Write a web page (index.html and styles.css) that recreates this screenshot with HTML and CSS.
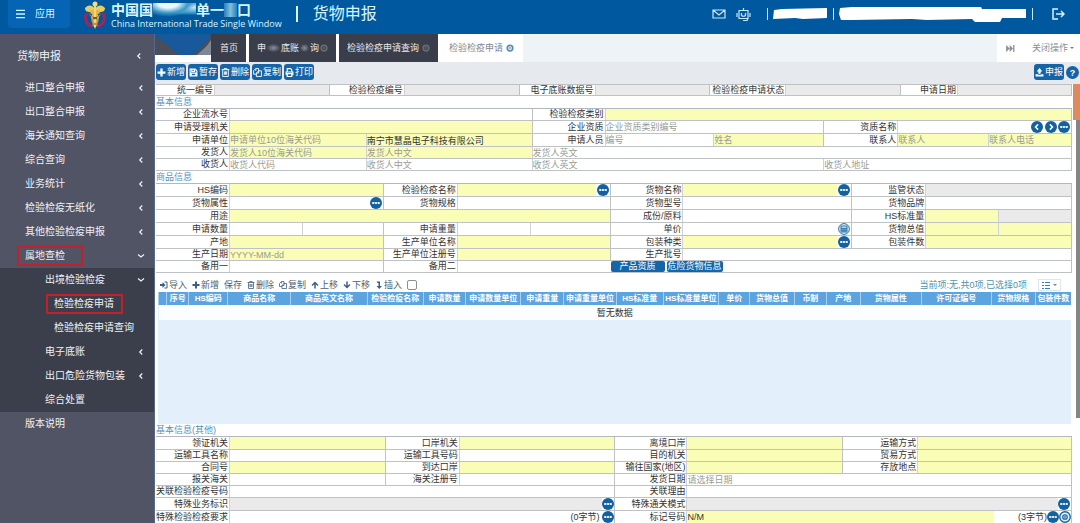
FILE: index.html
```
<!DOCTYPE html>
<html lang="zh-CN">
<head>
<meta charset="utf-8">
<title>货物申报</title>
<link rel="stylesheet" href="styles.css">
</head>
<body>
<svg class="sprite" aria-hidden="true">
  <symbol id="i-plus" viewBox="0 0 16 16"><path d="M6 1h4v5h5v4h-5v5H6v-5H1V6h5z" fill="currentColor"/></symbol>
  <symbol id="i-save" viewBox="0 0 16 16"><path d="M2 2h9l3 3v9H2zM5 2v4h5V2M4 14V9h8v5" fill="none" stroke="currentColor" stroke-width="2"/></symbol>
  <symbol id="i-trash" viewBox="0 0 16 16"><path d="M1 3h14M5.500 3V1h5v2M3 3v12h10V3M6 6v6M8 6v6M10 6v6" fill="none" stroke="currentColor" stroke-width="1.600"/></symbol>
  <symbol id="i-copy" viewBox="0 0 16 16"><path d="M5 5V1h5v5M5 1L1 5v6h5M10 5h5v10H6V9l4-4v4H6" fill="none" stroke="currentColor" stroke-width="1.600"/></symbol>
  <symbol id="i-print" viewBox="0 0 16 16"><path d="M4 7V1h6l2 2v4M2 12V7h12v5h-2M4 10h8v5H4zM2 12h2" fill="none" stroke="currentColor" stroke-width="2"/></symbol>
  <symbol id="i-upload" viewBox="0 0 16 16"><path d="M8 0l5 6h-3v4H6V6H3zM1 11h4v1h6v-1h4v4H1z" fill="currentColor"/></symbol>
  <symbol id="i-up" viewBox="0 0 16 16"><path d="M8 1l7 7-2 2-3.500-3.500V15h-3V6.500L3 10 1 8z" fill="currentColor"/></symbol>
  <symbol id="i-down" viewBox="0 0 16 16"><path d="M8 15l7-7-2-2-3.500 3.500V1h-3v8.500L3 6 1 8z" fill="currentColor"/></symbol>
  <symbol id="i-insert" viewBox="0 0 16 16"><path d="M3 1h7v9h4l-5.500 6L3 10h4V4H5z" fill="currentColor"/></symbol>
  <symbol id="i-import" viewBox="0 0 16 16"><path d="M0 6h5V2l6 6-6 6v-4H0z" fill="currentColor"/><path d="M9 2h5v12H9" fill="none" stroke="currentColor" stroke-width="2"/></symbol>
  <symbol id="i-more" viewBox="0 0 16 16"><circle cx="8" cy="8" r="8" fill="#13629f"/><path d="M3 7.900h10" stroke="#6fa5cf" stroke-width="2"/><circle cx="4.200" cy="8" r="1.400" fill="#fff"/><circle cx="8" cy="8" r="1.400" fill="#fff"/><circle cx="11.800" cy="8" r="1.400" fill="#fff"/></symbol>
  <symbol id="i-prev" viewBox="0 0 16 16"><circle cx="8" cy="8" r="8" fill="#13629f"/><path d="M9.500 4.500L6 8l3.500 3.500" fill="none" stroke="#fff" stroke-width="2"/></symbol>
  <symbol id="i-next" viewBox="0 0 16 16"><circle cx="8" cy="8" r="8" fill="#13629f"/><path d="M6.500 4.500L10 8l-3.500 3.500" fill="none" stroke="#fff" stroke-width="2"/></symbol>
  <symbol id="i-calc" viewBox="0 0 16 16"><circle cx="8" cy="8" r="7.200" fill="#e4f0fa" stroke="#13629f" stroke-width="1.200"/><path d="M4 4h8v8H4zM4 7h8M4 9.500h8M6.700 7v5M9.300 7v5" fill="none" stroke="#13629f" stroke-width="1.200"/></symbol>
  <symbol id="i-at" viewBox="0 0 16 16"><circle cx="8" cy="8" r="7" fill="#e4f0fa" stroke="#13629f" stroke-width="1.800"/><circle cx="8" cy="8" r="3" fill="none" stroke="#13629f" stroke-width="1.600"/><path d="M8 6v4" stroke="#13629f" stroke-width="1.600"/></symbol>
  <symbol id="i-close" viewBox="0 0 16 16"><circle cx="8" cy="8" r="5.500" fill="none" stroke="currentColor" stroke-width="3.500"/><path d="M6 6l4 4M10 6l-4 4" stroke="currentColor" stroke-width="1.200"/></symbol>
  <symbol id="i-left" viewBox="0 0 16 16"><path d="M10.500 3L5.500 8l5 5" fill="none" stroke="currentColor" stroke-width="2.400"/></symbol>
  <symbol id="i-open" viewBox="0 0 16 16"><path d="M2 5l6 5 6-5" fill="none" stroke="currentColor" stroke-width="2.400"/></symbol>
</svg>

<header class="header">
  <button class="apps"><svg class="burger" viewBox="0 0 10 10"><path d="M0 1h10M0 5h10M0 9h10" stroke="#c9f5ff" stroke-width="1.400"/></svg>应用</button>
  <svg class="logo" viewBox="0 0 24 28">
    <path d="M4 12C1 17 3 24 9 25M20 12c3 5 1 12-5 13" fill="none" stroke="#a3235a" stroke-width="3"/>
    <path d="M12 8C8 2 4 5 2 7c0 3 2 4 5 4l5 1 5-1c3 0 5-1 5-4-2-2-6-5-10 1z" fill="#e6cf62"/>
    <path d="M7 9h10l-1 7-2 8-2 4-2-4-2-8z" fill="#e2b64c"/>
    <path d="M12 2v24" stroke="#f1d873" stroke-width="2"/><circle cx="12" cy="3" r="2.500" fill="#f3dd80"/>
    <path d="M8 12c-4 3 7 5 7 8s-6 3-5 5M16 12c4 3-7 5-7 8s6 3 5 5" fill="none" stroke="#c98a35" stroke-width="1.400"/>
    <path d="M7 13l2 1M15 14l2-1M10 17h4" stroke="#3b4f50" stroke-width="1.600"/>
  </svg>
  <div class="brand">
    <div class="brand-cn">中国国<i class="smear"></i>单一<i class="smear narrow"></i>口</div>
    <div class="brand-en">China International Trade Single Window</div>
  </div>
  <i class="divider"></i>
  <h1 class="system">货物申报</h1>
  <div class="account">
    <svg class="mail" viewBox="0 0 14 10"><path d="M1 1h12v8H1zM1 1l6 5 6-5" fill="none" stroke="#c5e8fa" stroke-width="1.200"/></svg>
    <svg class="robot" viewBox="0 0 15 15"><path d="M3 3.500h9v8H3zM7.500 3V1M1 6v4M14 6v4M5.500 6v2.500q2 1.500 4 0V6M7 13.500h4l1-2" fill="none" stroke="#c5e8fa" stroke-width="1.200"/></svg>
    <i class="bar"></i>
    <svg class="mask-a" viewBox="0 0 55 12" preserveAspectRatio="none"><path d="M1 2l8-1 45-1v10l-24 1-8-1-22 1z" fill="#fff"/></svg>
    <i class="bar"></i>
    <svg class="mask-b" viewBox="0 0 188 16" preserveAspectRatio="none"><path d="M1 2l12-1h129l1 2h44v9h-24l-2 4h-25l-3-3-45 1-15-1-60 1H2L0 8z" fill="#fff"/></svg>
    <i class="bar"></i>
    <svg class="exit" viewBox="0 0 13 12"><path d="M6 1H1v10h5M4 6h8M9 3l3 3-3 3" fill="none" stroke="#d5f2ff" stroke-width="1.500"/></svg>
  </div>
</header>

<div class="shell">
  <nav class="side">
    <a class="item top" href="#">货物申报<svg><use href="#i-left"/></svg></a>
    <a class="item" href="#">进口整合申报<svg><use href="#i-left"/></svg></a>
    <a class="item" href="#">出口整合申报<svg><use href="#i-left"/></svg></a>
    <a class="item" href="#">海关通知查询<svg><use href="#i-left"/></svg></a>
    <a class="item" href="#">综合查询<svg><use href="#i-left"/></svg></a>
    <a class="item" href="#">业务统计<svg><use href="#i-left"/></svg></a>
    <a class="item" href="#">检验检疫无纸化<svg><use href="#i-left"/></svg></a>
    <a class="item" href="#">其他检验检疫申报<svg><use href="#i-left"/></svg></a>
    <a class="item" href="#"><span class="marked">属地查检</span><svg><use href="#i-open"/></svg></a>
    <div class="sub">
      <a class="item" href="#">出境检验检疫<svg><use href="#i-open"/></svg></a>
      <a class="item deep" href="#"><span class="marked tight">检验检疫申请</span></a>
      <a class="item deep" href="#">检验检疫申请查询</a>
      <a class="item" href="#">电子底账<svg><use href="#i-left"/></svg></a>
      <a class="item" href="#">出口危险货物包装<svg><use href="#i-left"/></svg></a>
      <a class="item" href="#">综合处置</a>
    </div>
    <a class="item" href="#">版本说明</a>
  </nav>

  <main class="main">
    <div class="tabs">
      <svg class="lead" viewBox="0 0 56 21" preserveAspectRatio="none"><path d="M0 0h56v21H0z" fill="#4a4d5a"/><path d="M0 0h56c-2 6-6 9-10 14l-8 7H24l-8-7C10 9 6 5 0 3z" fill="#17599a"/><path d="M56 6v15H42c4-4 9-7 14-15z" fill="#7e8793"/></svg>
      <button class="tab home">首页</button>
      <button class="tab second">申<i class="fog"></i>底账<i class="fog small"></i>询<svg><use href="#i-close"/></svg></button>
      <button class="tab">检验检疫申请查询<svg><use href="#i-close"/></svg></button>
      <button class="tab active">检验检疫申请<svg><use href="#i-close"/></svg></button>
      <div class="tab-tools">
        <svg class="ff" viewBox="0 0 10 8"><path d="M0 0l4 4-4 4zM4 0l4 4-4 4zM8 0h1.500v8H8z" fill="#8d9196"/></svg>
        <button class="closer">关闭操作<i class="caret"></i></button>
      </div>
    </div>

    <div class="actions">
      <button class="btn"><svg><use href="#i-plus"/></svg>新增</button>
      <button class="btn"><svg><use href="#i-save"/></svg>暂存</button>
      <button class="btn"><svg><use href="#i-trash"/></svg>删除</button>
      <button class="btn"><svg><use href="#i-copy"/></svg>复制</button>
      <button class="btn"><svg><use href="#i-print"/></svg>打印</button>
      <span class="grow"></span>
      <button class="btn"><svg><use href="#i-upload"/></svg>申报</button>
      <button class="help">?</button>
    </div>

    <div class="page">
      <form class="content">
        <div class="row status">
          <label><span>统一编号</span><input disabled></label>
          <label><span>检验检疫编号</span><input disabled></label>
          <label><span>电子底账数据号</span><input disabled></label>
          <label><span>检验检疫申请状态</span><input disabled></label>
          <label><span>申请日期</span><input disabled></label>
        </div>

        <h2 class="title">基本信息</h2>
        <section class="block">
          <div class="row b1">
            <label><span>企业流水号</span><input></label>
            <label><span>检验检疫类别</span><input class="req"></label>
          </div>
          <div class="row b2 tall">
            <label><span>申请受理机关</span><input class="req"></label>
            <label><span>企业资质</span><input placeholder="企业资质类别编号"></label>
            <label><span>资质名称</span><input></label>
            <div class="icons"><svg><use href="#i-prev"/></svg><svg><use href="#i-next"/></svg><svg><use href="#i-more"/></svg></div>
          </div>
          <div class="row b3 tall">
            <label><span>申请单位</span><input class="req" placeholder="申请单位10位海关代码"></label>
            <input class="req" aria-label="申请单位名称" value="南宁市慧晶电子科技有限公司">
            <label><span>申请人员</span><input placeholder="编号"></label>
            <input class="req" aria-label="姓名" placeholder="姓名">
            <label><span>联系人</span><input class="req" placeholder="联系人"></label>
            <input class="req" aria-label="联系人电话" placeholder="联系人电话">
          </div>
          <div class="row b4">
            <label><span>发货人</span><input class="req" placeholder="发货人10位海关代码"></label>
            <input class="req" aria-label="发货人中文" placeholder="发货人中文">
            <input aria-label="发货人英文" placeholder="发货人英文">
          </div>
          <div class="row b5">
            <label><span>收货人</span><input placeholder="收货人代码"></label>
            <input aria-label="收货人中文" placeholder="收货人中文">
            <input aria-label="收货人英文" placeholder="收货人英文">
            <input aria-label="收货人地址" placeholder="收货人地址">
          </div>
        </section>

        <h2 class="title">商品信息</h2>
        <section class="block">
          <div class="row g1 tall">
            <label><span>HS编码</span><input class="req"></label>
            <label><span>检验检疫名称</span><input class="req"></label>
            <div class="icons"><svg><use href="#i-more"/></svg></div>
            <label><span>货物名称</span><input class="req"></label>
            <div class="icons"><svg><use href="#i-more"/></svg></div>
            <label><span>监管状态</span><input disabled></label>
          </div>
          <div class="row g2 tall">
            <label><span>货物属性</span><input></label>
            <div class="icons"><svg><use href="#i-more"/></svg></div>
            <label><span>货物规格</span><input></label>
            <label><span>货物型号</span><input></label>
            <label><span>货物品牌</span><input></label>
          </div>
          <div class="row g3 tall">
            <label><span>用途</span><input class="req"></label>
            <label><span>成份/原料</span><input></label>
            <label><span>HS标准量</span><input class="req"></label>
            <input aria-label="HS标准量单位" disabled>
          </div>
          <div class="row g4 tall">
            <label><span>申请数量</span><input></label>
            <input aria-label="申请数量单位">
            <label><span>申请重量</span><input></label>
            <input aria-label="申请重量单位">
            <label><span>单价</span><input></label>
            <div class="icons"><svg><use href="#i-calc"/></svg></div>
            <label><span>货物总值</span><input class="req"></label>
            <input class="req" aria-label="币制">
          </div>
          <div class="row g5 tall">
            <label><span>产地</span><input class="req"></label>
            <label><span>生产单位名称</span><input class="req"></label>
            <label><span>包装种类</span><input class="req"></label>
            <div class="icons"><svg><use href="#i-more"/></svg></div>
            <label><span>包装件数</span><input class="req"></label>
          </div>
          <div class="row g6">
            <label><span>生产日期</span><input class="req" placeholder="YYYY-MM-dd"></label>
            <label><span>生产单位注册号</span><input class="req"></label>
            <label><span>生产批号</span><input></label>
          </div>
          <div class="row g7">
            <label><span>备用一</span><input></label>
            <label><span>备用二</span><input></label>
            <div class="pills"><button type="button" class="pill">产品资质</button><button type="button" class="pill">危险货物信息</button></div>
          </div>
        </section>

        <div class="tools">
          <button type="button"><svg><use href="#i-import"/></svg>导入</button>
          <button type="button"><svg><use href="#i-plus"/></svg>新增</button>
          <button type="button">保存</button>
          <button type="button"><svg><use href="#i-trash"/></svg>删除</button>
          <button type="button"><svg><use href="#i-copy"/></svg>复制</button>
          <button type="button"><svg><use href="#i-up"/></svg>上移</button>
          <button type="button"><svg><use href="#i-down"/></svg>下移</button>
          <button type="button"><svg><use href="#i-insert"/></svg>插入</button>
          <input type="checkbox" class="check" aria-label="插入">
          <span class="grow"></span>
          <span class="count">当前项:无,共0项,已选择0项</span>
          <button type="button" class="cols" aria-label="列"><svg viewBox="0 0 8 8"><path d="M0 1.500h2M3 1.500h5M0 4.500h2M3 4.500h5M0 7.500h2M3 7.500h5" fill="none" stroke="#2f86ad"/></svg><i class="caret"></i></button>
        </div>

        <div class="list">
          <table>
            <colgroup><col style="width:0.9%"><col style="width:2.4%"><col style="width:4.3%"><col style="width:6.9%"><col style="width:8.4%"><col style="width:6.1%"><col style="width:4.7%"><col style="width:6%"><col style="width:4.7%"><col style="width:5.8%"><col style="width:5.1%"><col style="width:6.1%"><col style="width:3.4%"><col style="width:4.9%"><col style="width:3.5%"><col style="width:3.7%"><col style="width:6.7%"><col style="width:7.7%"><col style="width:4.8%"><col style="width:3.9%"></colgroup>
            <thead><tr><th></th><th>序号</th><th>HS编码</th><th>商品名称</th><th>商品英文名称</th><th>检验检疫名称</th><th>申请数量</th><th>申请数量单位</th><th>申请重量</th><th>申请重量单位</th><th>HS标准量</th><th>HS标准量单位</th><th>单价</th><th>货物总值</th><th>币制</th><th>产地</th><th>货物属性</th><th>许可证编号</th><th>货物规格</th><th>包装件数</th></tr></thead>
            <tbody><tr><td colspan="20">暂无数据</td></tr></tbody>
          </table>
        </div>

        <h2 class="title">基本信息(其他)</h2>
        <section class="block">
          <div class="row o1 tall">
            <label><span>领证机关</span><input class="req"></label>
            <label><span>口岸机关</span><input class="req"></label>
            <label><span>离境口岸</span><input class="req"></label>
            <label><span>运输方式</span><input class="req"></label>
          </div>
          <div class="row o1">
            <label><span>运输工具名称</span><input></label>
            <label><span>运输工具号码</span><input></label>
            <label><span>目的机关</span><input class="req"></label>
            <label><span>贸易方式</span><input class="req"></label>
          </div>
          <div class="row o1">
            <label><span>合同号</span><input class="req"></label>
            <label><span>到达口岸</span><input class="req"></label>
            <label><span>输往国家(地区)</span><input class="req"></label>
            <label><span>存放地点</span><input class="req"></label>
          </div>
          <div class="row o4">
            <label><span>报关海关</span><input></label>
            <label><span>海关注册号</span><input></label>
            <label><span>发货日期</span><input placeholder="请选择日期"></label>
          </div>
          <div class="row o5">
            <label><span>关联检验检疫号码</span><input></label>
            <label><span>关联理由</span><input></label>
          </div>
          <div class="row o6 tall">
            <label><span>特殊业务标识</span><input disabled></label>
            <div class="icons"><svg><use href="#i-more"/></svg></div>
            <label><span>特殊通关模式</span><input disabled></label>
            <div class="icons"><svg><use href="#i-more"/></svg></div>
          </div>
          <div class="row o7 tall">
            <label><span>特殊检验检疫要求</span><input></label>
            <div class="icons">(0字节)<svg><use href="#i-more"/></svg></div>
            <label><span>标记号码</span><input class="req" value="N/M"></label>
            <div class="icons end">(3字节)<svg><use href="#i-more"/></svg><svg><use href="#i-at"/></svg></div>
          </div>
        </section>
      </form>
      <div class="scroll"><i class="thumb"></i></div>
    </div>
  </main>
</div>
</body>
</html>
```
FILE: styles.css
```
* { box-sizing: border-box; }
html, body { height: 100%; }
body {
  margin: 0;
  display: flex;
  flex-direction: column;
  overflow: hidden;
  font-family: "Liberation Sans", "Noto Sans CJK SC", sans-serif;
  font-size: 9px;
  line-height: 12px;
  color: #333;
  background: #fff;
}
button, input { font: inherit; color: inherit; margin: 0; padding: 0; border: 0; }
button { background: none; white-space: nowrap; }
a { color: inherit; text-decoration: none; }
h1, h2 { margin: 0; font-weight: 400; }
.sprite { display: none; }
.grow { flex: 1; }

/* header */
.header {
  flex: none;
  display: flex;
  align-items: flex-start;
  height: 34px;
  background: #00589f;
  color: #fff;
}
.apps {
  display: flex;
  align-items: center;
  gap: 10px;
  width: 62px;
  height: 28px;
  margin-left: 8px;
  padding-left: 8px;
  border-radius: 0 0 4px 4px;
  background: #0564b4;
  color: #d3f3ff;
  font-size: 10px;
}
.burger { width: 9px; height: 10px; }
.logo { width: 24px; height: 28px; margin: 1px 0 0 13px; }
.brand { margin-left: 4px; white-space: nowrap; color: #d9f6ff; }
.brand-cn {
  display: flex;
  align-items: center;
  height: 18px;
  margin-top: 1px;
  font-size: 14px;
  font-weight: 700;
  line-height: 18px;
}
.smear {
  width: 43px;
  height: 14px;
  background: radial-gradient(ellipse at 35% 0, #e9f8ff 0 25%, #3c98c8 50%, transparent 70%), radial-gradient(ellipse at 90% 30%, #d9f0f5, #3c98c8 40%, transparent 60%);
}
.smear.narrow { width: 13px; background: linear-gradient(90deg, #2b7dbb, #7fc1dd, #2b7dbb); }
.brand-en { font-family: "Open Sans", sans-serif; font-size: 9px; line-height: 10px; }
.divider { width: 2px; height: 16px; margin: 6px 0 0 14px; background: #d9f6ff; }
.system { margin-left: 15px; font-size: 16px; line-height: 28px; color: #d9f6ff; }
.account {
  display: flex;
  align-items: center;
  gap: 5px;
  height: 28px;
  margin-left: auto;
  padding-right: 15px;
}
.mail { width: 14px; height: 10px; margin-right: 5px; }
.robot { width: 15px; height: 15px; margin-right: 11px; }
.bar { width: 1px; height: 12px; background: #c5e8fa; }
.mask-a { width: 55px; height: 12px; }
.mask-b { width: 188px; height: 16px; }
.exit { width: 13px; height: 12px; margin-left: 14px; }

/* side menu */
.shell { flex: 1; display: flex; min-height: 0; }
.side {
  flex: none;
  width: 154px;
  background: #505465;
  color: #f0f1f5;
  font-size: 10px;
  border-top: 1px solid #5a4f72;
}
.item {
  display: flex;
  align-items: center;
  justify-content: space-between;
  height: 24px;
  padding: 0 9px 0 25px;
  white-space: nowrap;
}
.item svg { width: 8px; height: 8px; }
.item.top { height: 41px; padding: 0 11px 0 17px; font-size: 11px; }
.sub { background: #3b3f4c; }
.sub .item { padding-left: 45px; }
.sub .item.deep { padding-left: 54px; }
.marked { padding: 2px 16px 2px 6px; margin-left: -8px; border: 2px solid #c3202c; }
.marked.tight { padding-right: 7px; }

/* tabs */
.main { flex: 1; min-width: 0; display: flex; flex-direction: column; border-left: 1px solid #56688c; }
.tabs {
  flex: none;
  display: flex;
  height: 28px;
  background: linear-gradient(#eef3f6, #eef3f6) right / calc(100% - 56px) 100% no-repeat, #fff;
}
.lead { width: 56px; height: 21px; }
.tab {
  display: flex;
  align-items: center;
  gap: 3px;
  padding: 0 8px;
  border-right: 3px solid #fff;
  background: #3a3e4a;
  color: #e8eaee;
}
.tab.home { padding: 0 8px 0 9px; }
.tab.second { gap: 1px; }
.tab svg { width: 8px; height: 8px; color: #656b78; }
.tab.active { background: #fff; color: #7f878f; padding: 0 6px 0 8px; }
.tab.active svg { color: #5e8bb0; }
.fog { width: 13px; height: 8px; background: radial-gradient(ellipse, #8d9199, transparent 75%); }
.fog.small { width: 9px; }
.tab-tools {
  display: flex;
  align-items: center;
  gap: 17px;
  margin-left: auto;
  padding: 0 6px 0 9px;
  background: #fff;
  color: #8a8f95;
}
.ff { width: 9px; height: 7px; }
.closer { display: flex; align-items: center; gap: 2px; }
.caret { border: 2px solid transparent; border-top-color: #7a8088; border-bottom: 0; }

/* action bar */
.actions {
  flex: none;
  display: flex;
  align-items: flex-start;
  gap: 2px;
  height: 22px;
  padding: 2px 1px 0;
  background: #e6e9ee;
}
.btn {
  display: flex;
  align-items: center;
  gap: 1px;
  height: 16px;
  padding: 0 1px;
  border-radius: 3px;
  background: #1664a5;
  color: #fff;
}
.btn svg { width: 9px; height: 9px; }
.help { width: 13px; height: 13px; margin-top: 2px; border-radius: 50%; background: #1664a5; color: #fff; font-weight: 700; }

/* form */
.page { flex: 1; display: flex; min-height: 0; }
.content { flex: 1; min-width: 0; padding: 0 1px; }
.scroll { flex: none; width: 7px; height: 76%; border-right: 4px solid #858585; }
.thumb { display: block; width: 7px; height: 36px; background: #dd8a60; }
.title { height: 12px; padding-top: 1px; line-height: 11px; font-size: 9px; color: #5990b8; }
.block { border-top: 1px solid #b4b7bb; }
.row {
  display: grid;
  grid-template-rows: minmax(0, 1fr);
  height: 12px;
  border-bottom: 1px solid #bfc2c5;
  border-right: 1px solid #bfc2c5;
  line-height: 11px;
}
.row.tall { height: 13px; line-height: 12px; }
.row label { display: contents; }
.row label span {
  display: flex;
  justify-content: flex-end;
  min-width: 0;
  padding-right: 1px;
  border-left: 1px solid #bfc2c5;
  white-space: nowrap;
}
.row label:first-child span { border-left: 0; }
.row input { width: 100%; min-width: 0; height: 100%; border-left: 1px solid #d0d2d4; border-radius: 0; background: #fff; outline: 0; }
.row input.req { background: #fafdb6; }
.row input:disabled { background: #eaeaeb; }
.row input::placeholder { color: #999c94; opacity: 1; }
.icons { display: flex; align-items: center; justify-content: space-around; white-space: nowrap; }
.icons.end { justify-content: flex-end; }
.icons svg { flex: none; width: 12px; height: 12px; }
.status { border-top: 1px solid #bfc2c5; grid-template-columns: 58fr 115fr 75fr 115fr 76fr 115fr 76fr 115fr 57fr 114fr; }
.b1 { grid-template-columns: 73fr 303fr 73fr 467fr; }
.b2 { grid-template-columns: 73fr 303fr 73fr 219fr 74fr 133fr 41fr; }
.b3 { grid-template-columns: 73fr 137fr 166fr 73fr 109fr 110fr 74fr 91fr 83fr; }
.b4 { grid-template-columns: 73fr 137fr 166fr 540fr; }
.b5 { grid-template-columns: 73fr 137fr 166fr 292fr 248fr; }
.g1 { grid-template-columns: 73fr 154fr 74fr 139fr 14fr 73fr 155fr 14fr 74fr 146fr; }
.g2 { grid-template-columns: 73fr 140fr 14fr 74fr 153fr 73fr 169fr 74fr 146fr; }
.g3 { grid-template-columns: 73fr 381fr 73fr 169fr 74fr 73fr 73fr; }
.g4 { grid-template-columns: 73fr 73fr 81fr 74fr 73fr 80fr 73fr 155fr 14fr 74fr 73fr 73fr; }
.g5 { grid-template-columns: 73fr 154fr 74fr 153fr 73fr 155fr 14fr 74fr 146fr; }
.g6 { grid-template-columns: 73fr 154fr 74fr 153fr 73fr 389fr; }
.g7 { grid-template-columns: 73fr 154fr 74fr 153fr 462fr; }
.o1 { grid-template-columns: 73fr 156fr 74fr 156fr 72fr 156fr 75fr 154fr; }
.o4 { grid-template-columns: 73fr 156fr 74fr 156fr 72fr 385fr; }
.o5 { grid-template-columns: 73fr 386fr 72fr 385fr; }
.o6 { grid-template-columns: 73fr 373fr 13fr 72fr 372fr 13fr; }
.o7 { grid-template-columns: 73fr 341fr 45fr 72fr 308fr 77fr; }
.pills { display: flex; gap: 2px; padding-left: 1px; }
.pill { min-width: 54px; height: 11px; padding: 0 1px; border-radius: 2px; background: #1566a8; color: #fff; line-height: 11px; }

/* list */
.tools { display: flex; align-items: center; gap: 5px; height: 19px; padding: 4px 11px 0 4px; color: #4f5f70; }
.tools button { display: flex; align-items: center; gap: 1px; }
.tools svg { width: 8px; height: 8px; color: #3f5f80; }
.check { appearance: none; width: 10px; height: 10px; border: 1px solid #8b8f94; border-radius: 2px; background: #fff; }
.count { color: #4d93a8; margin-right: 6px; }
.tools .cols { gap: 3px; padding: 1px 3px; border: 1px solid #dfe6ec; }
.list { height: 132px; margin: 0 1px 0 2px; background: #e3effb; }
.list table { width: 100%; table-layout: fixed; border-collapse: collapse; }
.list th { height: 13px; padding: 0; border-left: 1px solid #a9d0f0; background: #5ba4e0; color: #fff; font-size: 8px; line-height: 12px; white-space: nowrap; }
.list td { height: 15px; padding: 0; background: #fbfdfe; text-align: center; }
```
